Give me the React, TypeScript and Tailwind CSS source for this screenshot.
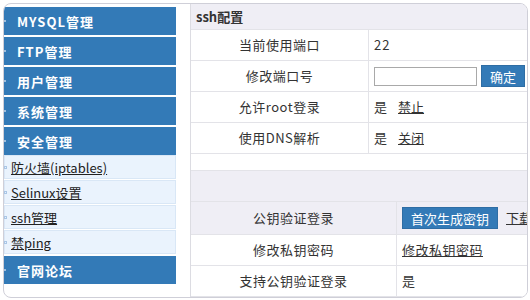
import React from "react";

const mainMenu = ["MYSQL管理", "FTP管理", "用户管理", "系统管理", "安全管理"];
const subMenu = ["防火墙(iptables)", "Selinux设置", "ssh管理", "禁ping"];

function Bar({ label }: { label: string }) {
  return (
    <div className="h-[28px] bg-[#337ab7] flex items-center mb-[2px]">
      <span className="w-[2px] h-[2px] bg-[#9fbfdf] shrink-0" />
      <span className="ml-[11px] text-white font-bold text-[13px] tracking-[1px] leading-none">{label}</span>
    </div>
  );
}

function Sub({ label }: { label: string }) {
  return (
    <div className="h-[24px] bg-[#eaf3fd] border border-[#d9e7f6] flex items-center mb-[1px]">
      <span className="w-[3px] h-[3px] border border-[#a9c6e6] shrink-0 -ml-px" />
      <span className="ml-[4px] text-[13px] text-[#222] underline leading-none">{label}</span>
    </div>
  );
}

function Row({ label, children, h = "h-[31px]", w = "w-[178px]", bg = "bg-white" }: { label: string; children?: React.ReactNode; h?: string; w?: string; bg?: string }) {
  return (
    <div className={`flex ${h} ${bg} border-b border-[#e3e3e8]`}>
      <div className={`${w} shrink-0 border-r border-[#e3e3e8] flex items-center justify-center text-[13px] text-[#333] tracking-[0.5px]`}>
        {label}
      </div>
      <div className="flex items-center pl-[5px] text-[13px] text-[#333] whitespace-nowrap gap-[8px]">{children}</div>
    </div>
  );
}

export default function App() {
  return (
    <div className="w-[530px] h-[300px] pt-[3px] pl-[3px] bg-white font-['Microsoft_YaHei','Noto_Sans_CJK_SC',sans-serif]">
      <div className="w-[525px] h-[295px] border border-[#cfcfd8] rounded-[8px] overflow-hidden flex bg-white">
        <div className="w-[172px] shrink-0 pt-[3px]">
          {mainMenu.map((m) => (
            <Bar key={m} label={m} />
          ))}
          <div className="-mt-[2px]">
            {subMenu.map((s) => (
              <Sub key={s} label={s} />
            ))}
          </div>
          <div className="mt-[2px]">
            <Bar label="官网论坛" />
          </div>
        </div>
        <div className="ml-[14px] flex-1 border-l border-[#dcdce2] overflow-hidden">
          <div className="h-[26px] bg-[#efeef5] border-b border-[#e3e3e8] flex items-center pl-[5px] text-[13px] font-bold text-[#333]">
            ssh配置
          </div>
          <Row label="当前使用端口">
            <span className="tracking-[1px]">22</span>
          </Row>
          <Row label="修改端口号">
            <input className="w-[103px] h-[19px] border border-[#a9a9a9] bg-white outline-none" />
            <button className="-ml-[4px] h-[22px] px-[8px] bg-[#337ab7] border border-[#2e6da4] text-white text-[13px] leading-none">
              确定
            </button>
          </Row>
          <Row label="允许root登录">
            <span>是</span>
            <span className="underline ml-[3px]">禁止</span>
          </Row>
          <Row label="使用DNS解析">
            <span>是</span>
            <span className="underline ml-[3px]">关闭</span>
          </Row>
          <div className="mt-[16px] border-t border-[#e3e3e8]">
            <div className="h-[31px] bg-[#efeef5] border-b border-[#e3e3e8]" />
            <Row label="公钥验证登录" h="h-[33px]" w="w-[206px]" bg="bg-[#efeef5]">
              <button className="h-[22px] px-[8px] bg-[#337ab7] border border-[#2e6da4] text-white text-[13px] leading-none">
                首次生成密钥
              </button>
              <span className="underline">下载密钥</span>
            </Row>
            <Row label="修改私钥密码" w="w-[206px]">
              <span className="underline tracking-[0.5px]">修改私钥密码</span>
            </Row>
            <Row label="支持公钥验证登录" w="w-[206px]">
              <span>是</span>
            </Row>
          </div>
        </div>
      </div>
    </div>
  );
}
